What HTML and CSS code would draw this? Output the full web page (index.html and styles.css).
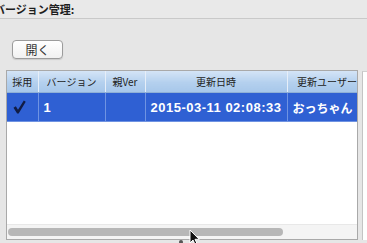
FILE: index.html
```html
<!DOCTYPE html>
<html>
<head>
    <title>バージョン管理</title>
    <link rel="stylesheet" href="styles.css">
</head>
<body>
    <div class="title">バージョン管理:</div>
    <div class="toolbar">
        <button class="btn" type="button">開く</button>
    </div>
    <div class="area">
        <div class="table-frame">
            <div class="table-clip">
                <table class="versions">
                    <colgroup>
                        <col class="c-use">
                        <col class="c-ver">
                        <col class="c-parent">
                        <col class="c-date">
                        <col class="c-user">
                        <col class="c-extra">
                    </colgroup>
                    <thead>
                        <tr>
                            <th>採用</th>
                            <th>バージョン</th>
                            <th>親Ver</th>
                            <th>更新日時</th>
                            <th>更新ユーザー</th>
                            <th></th>
                        </tr>
                    </thead>
                    <tbody>
                        <tr class="selected">
                            <td class="check">
                                <svg width="13" height="14" viewBox="0 0 12 13">
                                    <path d="M0.4 7.2 L2.6 5.8 L4.6 9 L10 0.4 L11.8 1.6 L5.2 12.6 L3.8 12.6 Z" fill="#111c44"/>
                                </svg>
                            </td>
                            <td class="num">1</td>
                            <td></td>
                            <td class="num">2015-03-11 02:08:33</td>
                            <td class="user">おっちゃん</td>
                            <td></td>
                        </tr>
                    </tbody>
                </table>
            </div>
            <div class="hscroll">
                <div class="thumb"></div>
            </div>
        </div>
        <div class="side-panel"></div>
    </div>

    <!-- mouse pointer over the scrollbar -->
    <svg class="cursor" width="12" height="18" viewBox="0 0 12 18">
        <path d="M1 1 L1 14 L4 11 L6.5 16.5 L8.5 15.6 L6 10.3 L10.2 10.3 Z" fill="#111" stroke="#fff" stroke-width="1"/>
    </svg>
    <span class="dot"></span>
</body>
</html>
```

FILE: styles.css
```css
body {
    margin: 0;
    background: #e6e6e6;
    font-family: "Noto Sans CJK JP", "Liberation Sans", sans-serif;
    color: #222;
    width: 367px;
    height: 243px;
    overflow: hidden;
    position: relative;
}
.title {
    height: 18px;
    line-height: 18px;
    margin-left: -6px;
    font-size: 11px;
    font-weight: bold;
    color: #1e1e1e;
    background: #e9e9e9;
    border-bottom: 1px solid #c9c9c9;
    white-space: nowrap;
}
.toolbar {
    padding: 17px 0 0 12px;
    height: 34px;
}
.btn {
    width: 51px;
    height: 19px;
    padding: 0;
    font-family: "Noto Sans CJK JP", sans-serif;
    font-size: 12px;
    line-height: 17px;
    color: #333;
    background: linear-gradient(#ffffff, #f1f1f1);
    border: 1px solid #9c9c9c;
    border-radius: 4px;
    box-shadow: 0 1px 1px rgba(0, 0, 0, 0.12);
}
.area {
    display: flex;
    padding-left: 6px;
}
.table-frame {
    width: 350px;
    height: 168px;
    border: 1px solid #a9a9a9;
    background: #fff;
    display: flex;
    flex-direction: column;
}
.table-clip {
    flex: 1;
    overflow: hidden;
}
.versions {
    border-collapse: collapse;
    table-layout: fixed;
    width: 450px;
}
.c-use { width: 31px; }
.c-ver { width: 67px; }
.c-parent { width: 40px; }
.c-date { width: 142px; }
.c-user { width: 80px; }
.c-extra { width: 90px; }
.versions th {
    height: 21px;
    padding: 0;
    font-size: 10px;
    font-weight: normal;
    color: #222;
    white-space: nowrap;
    overflow: hidden;
    background: linear-gradient(#d4e4f6, #b4d0ee 55%, #a7c7ea);
    border-right: 1px solid #e6eef8;
    border-bottom: 1px solid #8fb0d6;
}
.versions td {
    height: 28px;
    padding: 0 0 0 5px;
    white-space: nowrap;
    overflow: hidden;
}
.selected td {
    background: #2f60d3;
    color: #fff;
    border-right: 1px solid #6f93e2;
    border-bottom: 1px solid #6f93e2;
}
.check svg {
    display: block;
    margin-left: 1px;
}
.num {
    font-family: "Liberation Sans", Arial, sans-serif;
    font-weight: bold;
    font-size: 13px;
    letter-spacing: 0.5px;
}
.user {
    font-weight: bold;
    font-size: 12px;
}
.hscroll {
    height: 11px;
    padding: 3px 2px 0 1px;
    background: #f4f4f4;
    border-top: 1px solid #e8e8e8;
}
.thumb {
    width: 275px;
    height: 8px;
    border-radius: 4px;
    background: #b7b7b7;
}
.side-panel {
    flex: 1;
    margin: 1px 0 0 4px;
    background: #fff;
    border-left: 1px solid #c4c4c4;
    border-top: 1px solid #d0d0d0;
}
.cursor {
    position: absolute;
    left: 189px;
    top: 229px;
}
.dot {
    position: absolute;
    left: 179px;
    top: 240px;
    width: 4px;
    height: 4px;
    border-radius: 2px;
    background: #555;
}
```
